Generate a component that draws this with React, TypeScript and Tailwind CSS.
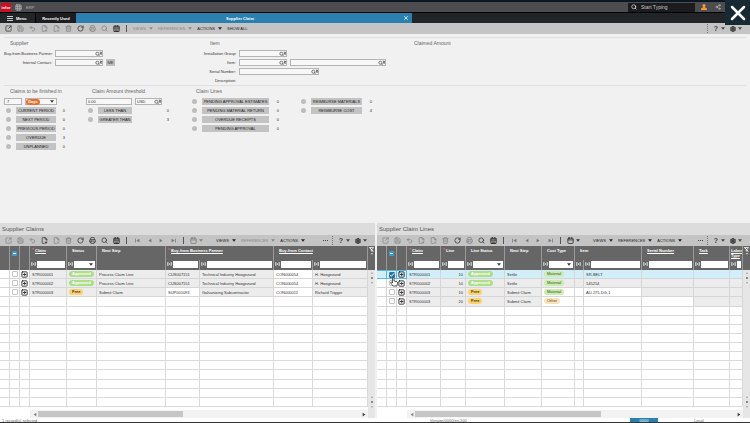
import { useState } from "react";
import {
    Calendar, CalendarDays, Check, FilePlus2, FileX2, Grid3x3, Printer,
    RotateCw, Save, Search, Settings, Share2, SquareArrowOutUpRight,
    SquareArrowRight, Trash2, Undo2, X, type LucideIcon
} from "lucide-react";
import clsx from "clsx";

interface ToolbarProps {
    label: string;
    dim: string[];
    nav?: boolean;
    calendarDim?: boolean;
    menusDim?: string[];
}

interface Column {
    width: string;
    title?: string;
    span?: number;
    required?: boolean;
    underline?: boolean;
    filter?: "text" | "select";
    narrow?: boolean;
}

type Cell = { text?: string; pill?: string; white?: boolean; right?: boolean };

const tools: { name: string; icon: LucideIcon }[] = [
    { name: "Open", icon: SquareArrowOutUpRight },
    { name: "Save", icon: Save },
    { name: "Undo", icon: Undo2 },
    { name: "New", icon: FilePlus2 },
    { name: "Duplicate", icon: FileX2 },
    { name: "Delete", icon: Trash2 },
    { name: "Refresh", icon: RotateCw },
    { name: "Print", icon: Printer },
    { name: "Find", icon: Search },
    { name: "Export", icon: CalendarDays }
];

const pillStyles: Record<string, string> = {
    Approved: "bg-[#addf8b] text-white font-bold",
    Free: "bg-[#f9d271] text-[#4a3c12] font-bold",
    Material: "bg-[#c9eeae] text-[#3c4a33]",
    Other: "bg-[#fbe3b9] text-[#4a4335]"
};

function Caret({ className = "w-1 h-[3px]" }: { className?: string }) {
    return (
        <svg viewBox="0 0 6 4" className={clsx("shrink-0 fill-current", className)} aria-hidden="true">
            <path d="M0 0h6L3 4z" />
        </svg>
    );
}

function Arrow({ dir, bar, className }: { dir: "left" | "right"; bar?: boolean; className?: string }) {
    return (
        <svg viewBox="0 0 8 8" className={clsx("w-[5px] h-[5px] fill-current", className)} aria-hidden="true">
            {dir === "left" ? <path d="M7 1v6L2.5 4z" /> : <path d="M1 1v6l4.5-3z" />}
            {bar && (dir === "left" ? <path d="M0 1h1.2v6H0z" /> : <path d="M6.8 1H8v6H6.8z" />)}
        </svg>
    );
}

function MenuButton({ label, dim }: { label: string; dim?: boolean }) {
    return (
        <button className={clsx("flex items-center gap-[3px] mr-[5px]", dim ? "text-[#8a8a8a]" : "text-[#222]")}>
            {label}
            <Caret />
        </button>
    );
}

function Separator() {
    return <span className="w-px h-[7px] mx-1 bg-[#555]" />;
}

function ToolbarEnd({ more }: { more?: boolean }) {
    return (
        <div className="flex items-center ml-auto text-[#444]">
            {more && (
                <button aria-label="More" className="flex gap-px mr-1">
                    <span className="w-px h-px bg-[#444]" />
                    <span className="w-px h-px bg-[#444]" />
                    <span className="w-px h-px bg-[#444]" />
                </button>
            )}
            <span className="h-[9px] border-l border-dotted border-[#777] mr-[6px]" />
            <button aria-label="Help" className="flex items-center gap-[3px] mr-[5px] text-[7px] leading-[7px] font-bold">
                ? <Caret />
            </button>
            <button aria-label="Settings" className="flex items-center gap-[2px] mr-2">
                <Settings className="w-[6px] h-[6px]" strokeWidth={5} />
                <Caret />
            </button>
        </div>
    );
}

function Toolbar({ label, dim, nav, calendarDim, menusDim = [] }: ToolbarProps) {
    return (
        <div role="toolbar" aria-label={label} className="flex items-center h-[11px] pl-[2px] bg-[#c4c4c4] text-[4px] leading-[5px] shrink-0">
            {tools.map(({ name, icon: Icon }) => (
                <button
                    key={name}
                    aria-label={name}
                    className={clsx("flex justify-center w-3", dim.includes(name) ? "text-[#858585]" : "text-[#333]")}
                >
                    <Icon className="w-[7px] h-[7px]" strokeWidth={name === "Export" ? 3.5 : 2.5} />
                </button>
            ))}
            <Separator />
            {nav && (
                <>
                    <button aria-label="First" className="flex justify-center w-3 text-[#777]"><Arrow dir="left" bar /></button>
                    <button aria-label="Previous" className="flex justify-center w-3 text-[#777]"><Arrow dir="left" /></button>
                    <button aria-label="Next" className="flex justify-center w-3 text-[#777]"><Arrow dir="right" /></button>
                    <button aria-label="Last" className="flex justify-center w-3 text-[#777]"><Arrow dir="right" bar /></button>
                    <Separator />
                    <button
                        aria-label="Calendar"
                        className={clsx("flex items-center gap-[2px] ml-[2px] mr-[11px]", calendarDim ? "text-[#858585]" : "text-[#333]")}
                    >
                        <Calendar className="w-[7px] h-[7px]" strokeWidth={3} />
                        <Caret />
                    </button>
                </>
            )}
            <div className="flex items-center pl-[2px]">
                {["VIEWS", "REFERENCES", "ACTIONS"].map((m) => (
                    <MenuButton key={m} label={m} dim={menusDim.includes(m)} />
                ))}
                {!nav && <button className="text-[#222]">SHOW ALL</button>}
            </div>
            <ToolbarEnd more={nav} />
        </div>
    );
}

function Lookup({ id, label, className, value }: { id: string; label?: string; className: string; value?: string }) {
    return (
        <span className={clsx("flex items-center h-[7px] bg-[#f7f7f7] border border-[#b4b4b4]", className)}>
            <input id={id} aria-label={label} defaultValue={value} className="w-full min-w-0 h-[5px] px-px outline-none" />
            <button aria-label="Look up" className="shrink-0">
                <svg viewBox="0 0 12 10" className="w-[7px] h-[6px] fill-none stroke-[#444]" strokeWidth="1.2" aria-hidden="true">
                    <circle cx="4" cy="4.500" r="2.6" />
                    <path d="M6 6.500l2 2.200M8.200 1.800h2.600v4.700M8.200 6.500l2.600-4.700" />
                </svg>
            </button>
        </span>
    );
}

function CountList({ items, className }: { items: [string, number][]; className: string }) {
    return (
        <ul className="flex flex-col gap-[2px]">
            {items.map(([label, count]) => (
                <li key={label} className={clsx("grid items-center h-[7px]", className)}>
                    <span className="w-[5px] h-[5px] rounded-full bg-[#bdbdbd]" />
                    <button className="h-[7px] bg-[#c3c3c3] text-[4px] leading-[7px] text-[#222] whitespace-nowrap">{label}</button>
                    <span className="text-right">{count}</span>
                </li>
            ))}
        </ul>
    );
}

function FilterIcon() {
    return (
        <svg viewBox="0 0 10 8" className="w-[5px] h-1 shrink-0 fill-none stroke-[#ddd]" strokeWidth="1.5" aria-hidden="true">
            <path d="M3 1H1v6h2M7 1h2v6H7M3 3.2h4M3 5h4" />
        </svg>
    );
}

function RowCheckbox({ row, initial }: { row: string; initial: boolean }) {
    const [checked, setChecked] = useState(initial);
    return (
        <span className="relative block w-[6px] h-[6px] mx-auto">
            <input
                type="checkbox"
                aria-label={row}
                checked={checked}
                onChange={(e) => setChecked(e.target.checked)}
                className="block appearance-none w-[6px] h-[6px] rounded-[1px] border border-[#c4c4c4] bg-white checked:bg-[#2578a9] checked:border-[#2578a9]"
            />
            {checked && <Check className="absolute inset-0 w-[6px] h-[6px] text-white pointer-events-none" strokeWidth={4} />}
        </span>
    );
}

function ScrollMarks() {
    return (
        <div className="flex flex-col items-center gap-[3px] text-[#888]">
            <Caret className="w-[2px] h-[2px] rotate-180" />
            <span className="w-[2px] h-[2px] bg-[#888]" />
            <Caret className="w-[2px] h-[2px]" />
        </div>
    );
}

function SideScroll() {
    return (
        <div className="flex flex-col w-[7px] shrink-0">
            <div className="flex flex-col items-center h-6 pt-px bg-[#666] text-white">
                <svg viewBox="0 0 10 10" className="w-[5px] h-[5px] fill-none stroke-white" strokeWidth="1.5" aria-hidden="true">
                    <path d="M1 1h8L6 5v4L4.500 7.500V5zM1 1l8 8" />
                </svg>
                <Caret className="w-[2px] h-[2px] mt-px" />
            </div>
            <div className="flex flex-col justify-between grow pt-[2px] pb-[10px] bg-[#e6e6e6]">
                <ScrollMarks />
                <ScrollMarks />
            </div>
        </div>
    );
}

interface PanelProps {
    title: string;
    columns: Column[];
    rows: Cell[][];
    selected?: number;
    thumb: string;
    dim: string[];
    calendarDim?: boolean;
    menusDim?: string[];
}

function GridPanel({ title, columns, rows, selected, thumb, dim, calendarDim, menusDim }: PanelProps) {
    const fillers = Array.from({ length: 15 - rows.length });

    return (
        <section className="flex flex-col min-w-0 bg-white">
            <h2 className="h-3 pl-[2px] bg-[#dcdcdc] text-[6px] leading-3 text-[#555]">{title}</h2>
            <Toolbar label={title} dim={dim} nav calendarDim={calendarDim} menusDim={menusDim} />
            <div className="flex">
                <div className="grow min-w-0">
                    <table className="w-full h-[161px] table-fixed border-separate border-spacing-0 text-[4px] leading-[5px]">
                        <colgroup>
                            <col className="w-[10px]" />
                            <col className="w-[10px]" />
                            <col className="w-[10px]" />
                            {columns.map((c, i) => <col key={i} className={c.width} />)}
                        </colgroup>
                        <thead className="bg-[#666] text-white">
                            <tr className="h-[14px]">
                                <th className="border-r border-[#999]" />
                                <th className="border-r border-[#999]">
                                    <button aria-label="Select rows" className="block mx-auto w-[5px] h-[5px] rounded-[1px] bg-[#3b9bd6]">
                                        <span className="block w-[3px] h-px mx-auto bg-white" />
                                    </button>
                                </th>
                                <th className="border-r border-[#999]" />
                                {columns.filter((c) => c.span !== 0).map((c, i) => (
                                    <th
                                        key={i}
                                        colSpan={c.span}
                                        className={clsx("relative pt-[2px] text-left align-top border-r border-[#999]", c.narrow ? "pl-px" : "pl-[5px] whitespace-nowrap")}
                                    >
                                        {c.required && <span className="absolute left-[2px] top-px text-[#ff6a5a]">*</span>}
                                        <span className={clsx(c.underline && "underline")}>{c.title}</span>
                                    </th>
                                ))}
                            </tr>
                            <tr className="h-[10px]">
                                <td className="border-r border-[#999]" />
                                <td className="border-r border-[#999]" />
                                <td className="border-r border-[#999]" />
                                {columns.map((c, i) => (
                                    <td key={i} className="pb-[2px] border-r border-[#999]">
                                        {c.filter && (
                                            <div className="flex items-center gap-px px-px overflow-hidden">
                                                <FilterIcon />
                                                {c.filter === "text" ? (
                                                    <input aria-label={`Filter ${c.title ?? "description"}`} className="w-full min-w-0 h-[7px] bg-white text-black outline-none" />
                                                ) : (
                                                    <span className="relative grow min-w-0">
                                                        <select aria-label={`Filter ${c.title}`} className="block appearance-none w-full h-[7px] bg-white text-black">
                                                            <option value=""></option>
                                                        </select>
                                                        <Caret className="absolute right-[2px] top-[2px] w-1 h-[3px] text-[#333] pointer-events-none" />
                                                    </span>
                                                )}
                                            </div>
                                        )}
                                    </td>
                                ))}
                            </tr>
                        </thead>
                        <tbody className="text-[#333]">
                            {rows.map((cells, r) => {
                                const active = r === selected;
                                const edge = active ? "border-y border-r border-[#5bb8e4]" : "border-b border-r border-[#d6d6d6]";
                                return (
                                    <tr key={r} className={clsx("h-[9px]", active && "bg-[#d2eef8]")}>
                                        <td className={edge} />
                                        <td className={edge}><RowCheckbox row={`Row ${r + 1}`} initial={active} /></td>
                                        <td className={edge}>
                                            <button aria-label="Details" className="flex justify-center w-full text-[#222]">
                                                <SquareArrowRight className="w-[7px] h-[7px]" strokeWidth={3} />
                                            </button>
                                        </td>
                                        {cells.map((cell, i) => (
                                            <td
                                                key={i}
                                                className={clsx(
                                                    "border-b border-r border-[#d6d6d6] px-[2px] whitespace-nowrap",
                                                    cell.right && "text-right",
                                                    !active && !cell.white && "bg-[#ececec]"
                                                )}
                                            >
                                                {cell.pill ? (
                                                    <span className={clsx("block w-fit px-[3px] rounded-full leading-[6px]", pillStyles[cell.pill])}>{cell.pill}</span>
                                                ) : cell.text}
                                            </td>
                                        ))}
                                    </tr>
                                );
                            })}
                            {fillers.map((_, r) => (
                                <tr key={r} className="h-[9px]">
                                    {Array.from({ length: columns.length + 3 }).map((_, i) => (
                                        <td key={i} className="border-b border-r border-[#dadada]" />
                                    ))}
                                </tr>
                            ))}
                        </tbody>
                    </table>
                    <div className="flex items-center h-2 mt-[3px] ml-[30px] bg-[#f2f2f2]">
                        <button aria-label="Scroll left" className="w-2 text-[#888]"><Arrow dir="left" className="mx-auto" /></button>
                        <div className="grow">
                            <div className={clsx("h-[6px] bg-[#c6c6c6]", thumb)} />
                        </div>
                        <button aria-label="Scroll right" className="w-2 text-[#444]"><Arrow dir="right" className="mx-auto" /></button>
                    </div>
                </div>
                <SideScroll />
            </div>
        </section>
    );
}

const claimColumns: Column[] = [
    { width: "w-[37px]", title: "Claim", required: true, underline: true, filter: "text" },
    { width: "w-[30px]", title: "Status", filter: "select" },
    { width: "w-[69px]", title: "Next Step" },
    { width: "w-[34px]", title: "Buy-from Business Partner", span: 2, required: true, underline: true, filter: "text" },
    { width: "w-[74px]", span: 0, filter: "text" },
    { width: "w-[39px]", title: "Buy-from Contact", span: 2, underline: true, filter: "text" },
    { width: "w-auto", span: 0, filter: "text" }
];

const claimRows: Cell[][] = [
    [{ text: "STR000001" }, { pill: "Approved" }, { text: "Process Claim Line" }, { text: "CUS007151" }, { text: "Technical Industry Hoogezand" }, { text: "CON000054", white: true }, { text: "H. Hoogezand" }],
    [{ text: "STR000002" }, { pill: "Approved" }, { text: "Process Claim Line" }, { text: "CUS007151" }, { text: "Technical Industry Hoogezand" }, { text: "CON000054", white: true }, { text: "H. Hoogezand" }],
    [{ text: "STR000003" }, { pill: "Free" }, { text: "Submit Claim" }, { text: "SUP001093", white: true }, { text: "Galvanizing Subcontractor" }, { text: "CON000011", white: true }, { text: "Richard Trigger" }]
];

const lineColumns: Column[] = [
    { width: "w-[34px]", title: "Claim", required: true, underline: true, filter: "text" },
    { width: "w-[25px]", title: "Line", required: true, filter: "text" },
    { width: "w-[39px]", title: "Line Status", filter: "select" },
    { width: "w-[37px]", title: "Next Step" },
    { width: "w-[33px]", title: "Cost Type", filter: "select" },
    { width: "w-[9px]", title: "Item", span: 2, filter: "text" },
    { width: "w-auto", span: 0, filter: "text" },
    { width: "w-[52px]", title: "Serial Number", underline: true, filter: "text" },
    { width: "w-[36px]", title: "Task", underline: true, filter: "text" },
    { width: "w-[13px]", title: "Labor Type", underline: true, filter: "text", narrow: true }
];

const lineRows: Cell[][] = [
    [{ text: "STR000001" }, { text: "10", right: true }, { pill: "Approved" }, { text: "Settle" }, { pill: "Material" }, {}, { text: "SR-BELT" }, {}, {}, {}],
    [{ text: "STR000002" }, { text: "10", right: true }, { pill: "Approved" }, { text: "Settle" }, { pill: "Material" }, {}, { text: "145214" }, {}, {}, {}],
    [{ text: "STR000003" }, { text: "10", right: true }, { pill: "Free" }, { text: "Submit Claim" }, { pill: "Material", white: true }, { white: true }, { text: "AU-275-DG-1", white: true }, {}, {}, {}],
    [{ text: "STR000003" }, { text: "20", right: true }, { pill: "Free" }, { text: "Submit Claim" }, { pill: "Other", white: true }, { white: true }, { white: true }, { white: true }, {}, {}]
];

const heading = "text-[5px] leading-[7px] text-[#666]";

export default function App() {
    return (
        <div className="relative flex flex-col min-h-screen bg-[#f1f1f1] text-[#333] font-['Liberation_Sans',Arial,sans-serif] text-[4px] leading-[5px]">
            {/* Application bar */}
            <header className="flex items-center h-3 pr-[29px] border-t-2 border-[#0b1722] bg-[#4d4d51] text-white">
                <div className="w-[10px] h-[9px] ml-px bg-[#d8081f] text-center text-[4px] leading-[9px] font-bold">infor</div>
                <button aria-label="Apps" className="ml-1 text-[#a9a9ad]"><Grid3x3 className="w-[7px] h-[7px]" strokeWidth={3} /></button>
                <span className="ml-1 text-[#b5b5b9]">ERP</span>
                <label className="flex items-center gap-1 w-[67px] h-[9px] ml-auto px-[3px] bg-[#1c1c1e]">
                    <Search className="w-[6px] h-[6px] shrink-0" strokeWidth={2.5} />
                    <input aria-label="Search" placeholder="Start Typing" className="w-full min-w-0 text-[5px] leading-[7px] outline-none placeholder:text-[#c8c8c8]" />
                </label>
                <button aria-label="User" className="ml-[6px]">
                    <svg viewBox="0 0 12 12" className="w-[6px] h-[6px] fill-[#f59b32]" aria-hidden="true">
                        <circle cx="6" cy="3" r="3" />
                        <path d="M4 5h4l1 3 3 1v3H0V9l3-1z" />
                    </svg>
                </button>
                <button aria-label="Share" className="ml-2 text-[#b9b9bd]"><Share2 className="w-[6px] h-[6px]" strokeWidth={2.5} /></button>
            </header>

            {/* Session tabs */}
            <nav className="flex h-[11px] border-t border-black bg-[#222527] text-white text-[4px] font-bold">
                <button className="flex items-center gap-[3px] w-9 shrink-0 pl-[7px] border-r border-black">
                    <svg viewBox="0 0 12 10" className="w-[6px] h-[5px] fill-[#ccc]" aria-hidden="true">
                        <path d="M0 0h12v2H0zM0 4h12v2H0zM0 8h12v2H0z" />
                    </svg>
                    Menu
                </button>
                <button className="w-10 shrink-0 bg-[#1b1d1f]">Recently Used</button>
                <div className="relative flex items-center justify-center basis-[336px] pr-2 bg-[#2a81b0]">
                    Supplier Claim
                    <button aria-label="Close tab" className="absolute right-[3px] top-[2px]"><X className="w-[6px] h-[6px]" strokeWidth={3} /></button>
                </div>
            </nav>
            <button aria-label="Close" className="absolute right-0 top-0 flex items-center justify-center w-[25px] h-[25px] bg-[#172a33] text-white">
                <X className="w-6 h-6" strokeWidth={2.5} />
            </button>

            <Toolbar label="Session" dim={["Save", "Undo", "New", "Duplicate", "Delete", "Print", "Find"]} menusDim={["VIEWS", "REFERENCES"]} />

            {/* Filter form */}
            <main className="grow mt-[3px] mx-1 border-t border-[#e0e0e0]">
                <div className="grid grid-cols-[200px_204px_1fr] pt-[2px] pb-px">
                    <section>
                        <h2 className={clsx(heading, "pl-[6px] mb-[3px]")}>Supplier</h2>
                        <div className="grid grid-cols-[48px_48px_auto] gap-x-[3px] gap-y-[2px] items-center">
                            <label htmlFor="partner" className="text-right whitespace-nowrap">Buy-from Business Partner:</label>
                            <Lookup id="partner" className="col-span-2 w-12" />
                            <label htmlFor="contact" className="text-right">Internal Contact:</label>
                            <Lookup id="contact" className="w-12" />
                            <button className="w-[9px] h-[7px] bg-[#bdbdbd]">ME</button>
                        </div>
                    </section>
                    <section>
                        <h2 className={clsx(heading, "pl-[6px] mb-[3px]")}>Item</h2>
                        <div className="grid grid-cols-[32px_48px_auto] auto-rows-[7px] gap-x-[3px] gap-y-[2px] items-center">
                            <label htmlFor="group" className="text-right whitespace-nowrap">Installation Group:</label>
                            <Lookup id="group" className="col-span-2 w-12" />
                            <label htmlFor="item" className="text-right">Item:</label>
                            <Lookup id="item" className="w-12" />
                            <Lookup id="item-name" label="Item name" className="w-24" />
                            <label htmlFor="serial" className="text-right whitespace-nowrap">Serial Number:</label>
                            <Lookup id="serial" className="col-span-2 w-20" />
                            <span className="text-right">Description:</span>
                        </div>
                    </section>
                    <section>
                        <h2 className={clsx(heading, "pl-[6px]")}>Claimed Amount</h2>
                    </section>
                </div>

                <div className="grid grid-cols-[82px_104px_1fr] pt-[2px] border-t border-[#e0e0e0]">
                    <section>
                        <h2 className={clsx(heading, "pl-[6px] mb-[3px] whitespace-nowrap")}>Claims to be finished in</h2>
                        <div className="flex gap-[3px] mb-[2px]">
                            <input aria-label="Number of days" defaultValue="7" className="w-[18px] h-[7px] px-[2px] border border-[#b4b4b4] bg-[#f7f7f7]" />
                            <div className="relative flex items-center w-8 h-[7px] border border-[#b4b4b4] bg-[#f7f7f7]">
                                <select aria-label="Unit" className="appearance-none w-[14px] h-[6px] rounded-full bg-[#e8702a] px-[2px] text-center leading-[6px] text-white font-bold">
                                    <option>Days</option>
                                </select>
                                <Caret className="absolute right-[2px] top-px w-1 h-[3px] pointer-events-none" />
                            </div>
                        </div>
                        <CountList
                            className="grid-cols-[5px_40px_4px] gap-x-[5px] pl-[2px]"
                            items={[["CURRENT PERIOD", 0], ["NEXT PERIOD", 0], ["PREVIOUS PERIOD", 0], ["OVERDUE", 3], ["UNPLANNED", 0]]}
                        />
                    </section>
                    <section>
                        <h2 className={clsx(heading, "pl-[6px] mb-[3px] whitespace-nowrap")}>Claim Amount threshold</h2>
                        <div className="flex gap-[3px] mb-[2px]">
                            <input aria-label="Threshold amount" defaultValue="0.00" className="w-[46px] h-[7px] px-px border border-[#b4b4b4] bg-[#f7f7f7]" />
                            <Lookup id="currency" label="Currency" value="USD" className="w-[27px]" />
                        </div>
                        <CountList
                            className="grid-cols-[5px_34px_32px] gap-x-[5px] pl-[2px]"
                            items={[["LESS THAN", 0], ["GREATER THAN", 3]]}
                        />
                    </section>
                    <section>
                        <h2 className={clsx(heading, "pl-[6px] mb-[3px]")}>Claim Lines</h2>
                        <div className="flex items-start gap-[22px] pl-[2px]">
                            <CountList
                                className="grid-cols-[5px_67px_5px] gap-x-[5px]"
                                items={[["PENDING APPROVAL ESTIMATES", 0], ["PENDING MATERIAL RETURN", 0], ["OVERDUE RECEIPTS", 0], ["PENDING APPROVAL", 0]]}
                            />
                            <CountList
                                className="grid-cols-[5px_51px_5px] gap-x-[5px]"
                                items={[["REIMBURSE MATERIALS", 0], ["REIMBURSE COST", 4]]}
                            />
                        </div>
                    </section>
                </div>
            </main>

            {/* Claims and claim lines */}
            <div className="relative grid grid-cols-[375fr_373fr] gap-x-[2px]">
                <GridPanel
                    title="Supplier Claims"
                    columns={claimColumns}
                    rows={claimRows}
                    thumb="w-[45%]"
                    dim={["Open", "Save", "Undo", "Duplicate", "Delete"]}
                    calendarDim
                    menusDim={["REFERENCES"]}
                />
                <GridPanel
                    title="Supplier Claim Lines"
                    columns={lineColumns}
                    rows={lineRows}
                    selected={0}
                    thumb="w-[58%]"
                    dim={["Open", "Save", "Undo", "New", "Duplicate", "Delete", "Print"]}
                />
                <svg viewBox="0 0 16 20" className="absolute left-[52%] top-[54px] w-2 h-[10px] pointer-events-none" aria-hidden="true">
                    <path d="M5 10V2.500a1.500 1.500 0 0 1 3 0V8l6 1.500c1 .4 1.200 1.200 1 2.500l-1 6H6L1.500 12c-.6-1.500 1-2.500 2-1.500L5 12z" fill="#fff" stroke="#222" strokeWidth="1.500" />
                </svg>
            </div>

            {/* Status bar */}
            <footer className="flex h-[5px] pl-[2px] border-b border-[#333] bg-white overflow-hidden text-[#666] leading-[5px]">
                <span className="basis-[428px]">1 record(s) selected</span>
                <span className="basis-[200px]">Version/0000/en.100</span>
                <span className="w-7 bg-[#2a81b0] text-center text-white">0000</span>
                <span className="ml-9">Local</span>
            </footer>
        </div>
    );
}
